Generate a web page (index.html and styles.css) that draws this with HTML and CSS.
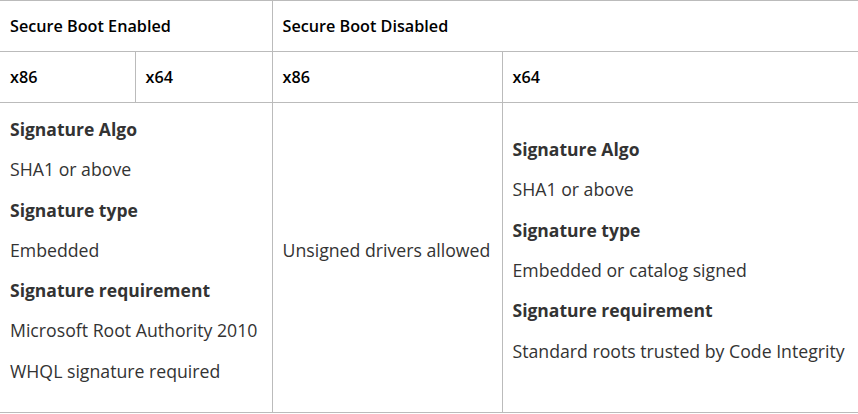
FILE: index.html
```html
<!DOCTYPE html>
<html>
<head>
<meta charset="utf-8">
<link rel="stylesheet" href="styles.css">
</head>
<body>
<table class="grid">
  <colgroup>
    <col class="c1"><col class="c2"><col class="c3"><col class="c4">
  </colgroup>
  <tr class="head">
    <th colspan="2">Secure Boot Enabled</th>
    <th colspan="2">Secure Boot Disabled</th>
  </tr>
  <tr class="head">
    <th>x86</th>
    <th>x64</th>
    <th>x86</th>
    <th>x64</th>
  </tr>
  <tr class="body">
    <td colspan="2">
      <p class="label">Signature Algo</p>
      <p>SHA1 or above</p>
      <p class="label">Signature type</p>
      <p>Embedded</p>
      <p class="label">Signature requirement</p>
      <p>Microsoft Root Authority 2010</p>
      <p>WHQL signature required</p>
    </td>
    <td>
      <p>Unsigned drivers allowed</p>
    </td>
    <td>
      <p class="label">Signature Algo</p>
      <p>SHA1 or above</p>
      <p class="label">Signature type</p>
      <p>Embedded or catalog signed</p>
      <p class="label">Signature requirement</p>
      <p>Standard roots trusted by Code Integrity</p>
    </td>
  </tr>
</table>
</body>
</html>
```

FILE: styles.css
```css
html, body {
  margin: 0;
  padding: 0;
  background: #fff;
}
body {
  font-family: "Open Sans", "Noto Sans", sans-serif;
  font-size: 17.7px;
  color: #333;
}
.grid {
  border-collapse: collapse;
  width: 858px;
  table-layout: fixed;
}
.c1 { width: 135px; }
.c2 { width: 137px; }
.c3 { width: 230px; }
.c4 { width: 356px; }
.grid th,
.grid td {
  border: 1px solid #bbbbbb;
  text-align: left;
  vertical-align: middle;
  padding: 0 10px;
  white-space: nowrap;
}
.grid tr > :first-child { border-left: none; }
.grid tr > :last-child { border-right: none; }
.head {
  height: 51px;
}
.head th {
  font-weight: 600;
  color: #000;
  font-size: 16.2px;
}
.body {
  height: 309px;
}
.body td {
  padding: 14px 10px 29px;
}
.body p {
  margin: 0;
  line-height: 24px;
}
.body p + p {
  margin-top: 16.3px;
}
.body .label {
  font-weight: 700;
  font-size: 17.5px;
}
```
